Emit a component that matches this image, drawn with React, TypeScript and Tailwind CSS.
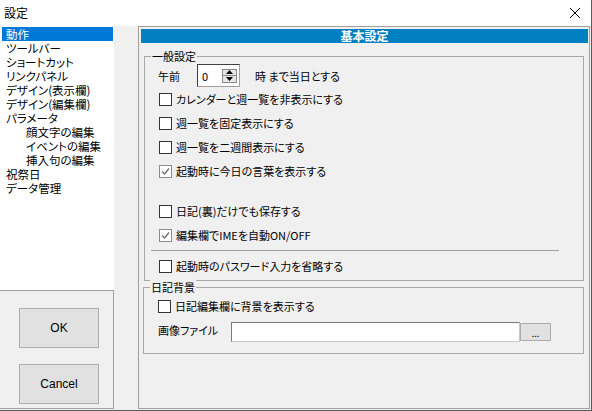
import React from "react";

const font = "font-['Noto_Sans_CJK_JP','Noto_Sans',sans-serif] [font-feature-settings:'palt']";

function Check({ label, checked }: { label: string; checked?: boolean }) {
  return (
    <div className="flex items-center h-[24px] pl-[14px]">
      <div
        className={
          "w-[13px] h-[13px] bg-white border flex items-center justify-center shrink-0 " +
          (checked ? "border-[#8c8c8c]" : "border-[#333333]")
        }
      >
        {checked && (
          <svg width="11" height="11" viewBox="0 0 11 11">
            <path d="M2 5.5 L4.5 8 L9 2.5" stroke="#6e6e6e" strokeWidth="1.3" fill="none" />
          </svg>
        )}
      </div>
      <span className="ml-[4px] text-[11px] leading-[14px] text-black">{label}</span>
    </div>
  );
}

function Group({ title, children, className }: { title: string; children: React.ReactNode; className?: string }) {
  return (
    <div className={"relative border border-[#a8a8a8] " + (className ?? "")}>
      <span className="absolute left-[6px] top-[-8px] bg-[#f0f0f0] px-[1px] text-[11px] leading-[14px] text-black">
        {title}
      </span>
      {children}
    </div>
  );
}

export default function App() {
  const items: { t: string; indent?: boolean; sel?: boolean }[] = [
    { t: "動作", sel: true },
    { t: "ツールバー" },
    { t: "ショートカット" },
    { t: "リンクパネル" },
    { t: "デザイン(表示欄)" },
    { t: "デザイン(編集欄)" },
    { t: "パラメータ" },
    { t: "顔文字の編集", indent: true },
    { t: "イベントの編集", indent: true },
    { t: "挿入句の編集", indent: true },
    { t: "祝祭日" },
    { t: "データ管理" },
  ];
  return (
    <div className={"w-[592px] h-[411px] bg-[#f0f0f0] flex flex-col overflow-hidden border-r border-b border-[#5a5a5a] " + font}>
      <div className="h-[26px] bg-white flex items-center justify-between pl-[4px] pr-[10px] shrink-0">
        <span className="text-[12px] leading-[14px] text-black">設定</span>
        <svg width="12" height="12" viewBox="0 0 12 12">
          <path d="M1 1 L11 11 M11 1 L1 11" stroke="#000" strokeWidth="1" />
        </svg>
      </div>
      <div className="flex flex-1">
        <div className="w-[114px] flex flex-col shrink-0">
          <div className="h-[264px] bg-white pt-[1px] pl-[2px] pr-[1px]">
            {items.map((it) => (
              <div
                key={it.t}
                className={
                  "h-[14px] text-[12px] leading-[14px] whitespace-nowrap overflow-hidden " +
                  (it.indent ? "pl-[24px] " : "pl-[4px] ") +
                  (it.sel ? "bg-[#0078d7] text-white" : "text-black")
                }
              >
                <span className="text-[11.5px] leading-[14px]">{it.t}</span>
              </div>
            ))}
          </div>
          <div className="h-[119px] border-t border-r border-b border-[#a0a0a0] flex flex-col pl-[19px] pt-[17px] gap-[16px]">
            <button className="w-[80px] h-[40px] bg-[#e1e1e1] border border-[#adadad] font-['Liberation_Sans',sans-serif] text-[12px] text-black">OK</button>
            <button className="w-[80px] h-[40px] bg-[#e1e1e1] border border-[#adadad] font-['Liberation_Sans',sans-serif] text-[12px] text-black">Cancel</button>
          </div>
        </div>
        <div className="ml-[24px] w-[452px] h-[383px] border border-[#a0a0a0] pt-[2px] pl-[2px] pr-[1px] flex flex-col">
          <div className="h-[14px] bg-[#0080c0] text-white font-bold text-[12px] leading-[14px] text-center">基本設定</div>
          <Group title="一般設定" className="mt-[13px] ml-[3px] w-[440px] pt-[7px] pb-[2px]">
            <div className="flex items-center h-[23px] pl-[13px]">
              <span className="w-[39px] text-[11px] leading-[14px] text-black">午前</span>
              <div className="w-[43px] h-[23px] bg-white border border-t-[#404040] border-l-[#404040] border-r-[#a0a0a0] border-b-[#a0a0a0] flex items-center pl-[4px] pr-[2px] justify-between">
                <span className="text-[11px] leading-[14px] text-black">0</span>
                <div className="flex flex-col w-[15px] h-[14px] border border-[#8a8a8a] bg-[#e6e6e6]">
                  <div className="flex-1 flex items-center justify-center border-b border-[#8a8a8a]">
                    <svg width="7" height="4" viewBox="0 0 7 4"><path d="M3.5 0 L7 4 L0 4 Z" fill="#000" /></svg>
                  </div>
                  <div className="flex-1 flex items-center justify-center">
                    <svg width="7" height="4" viewBox="0 0 7 4"><path d="M0 0 L7 0 L3.5 4 Z" fill="#000" /></svg>
                  </div>
                </div>
              </div>
              <span className="ml-[15px] text-[11px] leading-[14px] text-black">時 まで当日とする</span>
            </div>
            <Check label="カレンダーと週一覧を非表示にする" />
            <Check label="週一覧を固定表示にする" />
            <Check label="週一覧を二週間表示にする" />
            <Check label="起動時に今日の言葉を表示する" checked />
            <div className="h-[16px]" />
            <Check label="日記(裏)だけでも保存する" />
            <Check label="編集欄でIMEを自動ON/OFF" checked />
            <div className="mt-[3px] ml-[6px] w-[408px] h-[1px] bg-[#a0a0a0]" />
            <div className="mt-[3px]">
              <Check label="起動時のパスワード入力を省略する" />
            </div>
          </Group>
          <Group title="日記背景" className="mt-[6px] ml-[2px] w-[441px] pt-[6px] pb-[11px]">
            <Check label="日記編集欄に背景を表示する" />
            <div className="mt-[4px] flex items-start pl-[14px]">
              <span className="w-[73px] text-[11px] leading-[14px] text-black mt-[1px]">画像ファイル</span>
              <div className="w-[289px] h-[20px] bg-white border border-t-[#7a7a7a] border-l-[#7a7a7a] border-r-[#c8c8c8] border-b-[#c8c8c8]" />
              <div className="w-[31px] h-[18px] mt-[1px] bg-[#e1e1e1] border border-[#adadad] flex items-end justify-center text-[9px] leading-[12px] text-black">...</div>
            </div>
          </Group>
        </div>
      </div>
    </div>
  );
}
